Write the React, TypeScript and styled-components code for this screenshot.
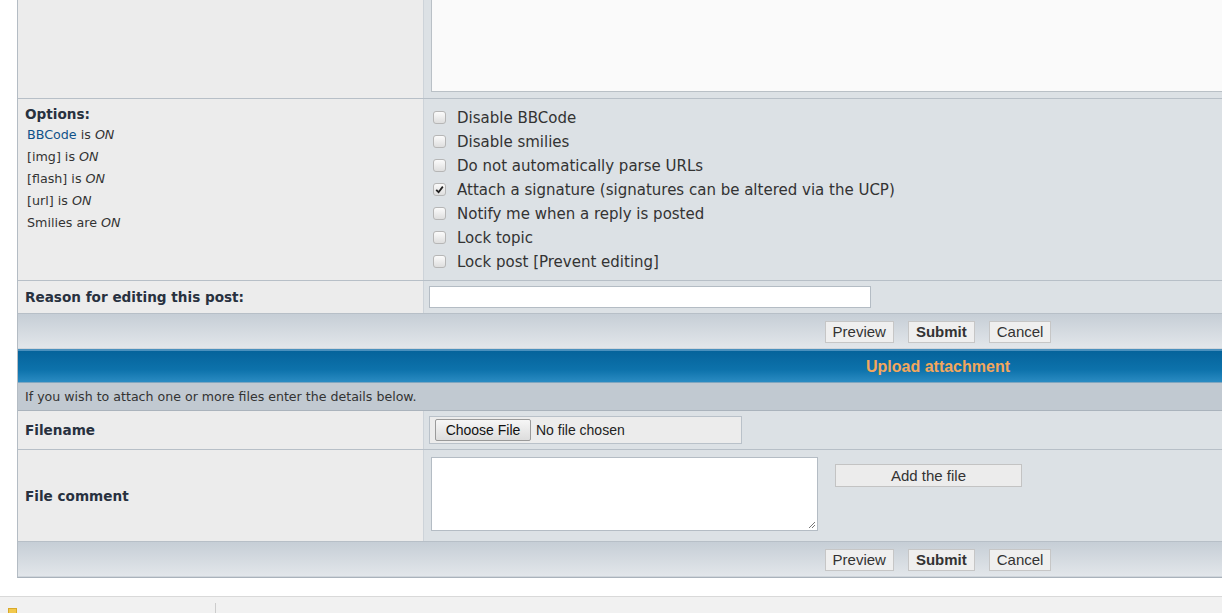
import React from "react";
import styled, { createGlobalStyle } from "styled-components";

const Global = createGlobalStyle`
  html, body { margin: 0; padding: 0; overflow: hidden; background: #ffffff; }
  body { font-family: "DejaVu Sans", Verdana, sans-serif; color: #333333; }
  * { box-sizing: border-box; }
`;

const Page = styled.div`
  width: 1222px;
  height: 613px;
  overflow: hidden;
  display: flex;
  flex-direction: column;
`;

const Panel = styled.div`
  margin-left: 17px;
  width: 1842px;
  border-left: 1px solid #b4bcc4;
  border-right: 1px solid #b4bcc4;
  border-bottom: 1px solid #a9b2bb;
  display: flex;
  flex-direction: column;
`;

const Row = styled.div<{ $h: number }>`
  display: grid;
  grid-template-columns: 406px 1fr;
  height: ${(p) => p.$h}px;
  border-bottom: 1px solid #b7bfc7;
`;

const Label = styled.div<{ $top?: boolean }>`
  background: #ececec;
  border-right: 1px solid #cdd3d9;
  padding: ${(p) => (p.$top ? "7px 7px 0" : "0 7px")};
  display: flex;
  flex-direction: column;
  justify-content: ${(p) => (p.$top ? "flex-start" : "center")};
  font-weight: bold;
  font-size: 13.6px;
  color: #28313f;
`;

const Field = styled.div<{ $pad?: string; $align?: string }>`
  background: #dce1e5;
  padding: ${(p) => p.$pad || "0 0 0 5px"};
  display: flex;
  align-items: ${(p) => p.$align || "center"};
`;

const BigArea = styled.div`
  width: 1420px;
  height: 92px;
  background: #fafafa;
  border: 1px solid #b9c0c6;
  border-top: none;
`;

const SubList = styled.div`
  margin-top: 2px;
  font-weight: normal;
  font-size: 12.7px;
  line-height: 22px;
  color: #333333;
  padding-left: 2px;
`;

const LinkText = styled.span`
  color: #105289;
`;

const OptList = styled.div`
  display: flex;
  flex-direction: column;
  padding-top: 7px;
`;

const OptRow = styled.label`
  display: flex;
  align-items: center;
  height: 24px;
  gap: 11px;
  font-size: 15px;
  color: #333333;
`;

const Box = styled.span`
  width: 13px;
  height: 13px;
  border: 1px solid #b6b6b6;
  border-radius: 3px;
  background: linear-gradient(#fbfbfb, #dedede);
  display: flex;
  align-items: center;
  justify-content: center;
  margin-top: -2px;
  flex-shrink: 0;
`;

const TextInput = styled.div`
  width: 442px;
  height: 22px;
  background: #ffffff;
  border: 1px solid #b4bcc4;
`;

const ButtonBar = styled.div<{ $h: number; $pt: number }>`
  height: ${(p) => p.$h}px;
  padding-top: ${(p) => p.$pt}px;
  background: linear-gradient(#c6ced6, #e2e6ea);
  display: flex;
  justify-content: center;
  gap: 14px;
  border-bottom: 1px solid #cfd5db;
`;

const Btn = styled.button<{ $bold?: boolean }>`
  height: 22px;
  padding: 0 7px;
  background: #efefef;
  border: 1px solid #c6c6c6;
  border-radius: 0;
  font-family: "Liberation Sans", Arial, sans-serif;
  font-size: 15px;
  font-weight: ${(p) => (p.$bold ? "bold" : "normal")};
  color: #333333;
  line-height: 20px;
`;

const Header = styled.div`
  height: 34px;
  border-top: 2px solid #4a90bd;
  background: linear-gradient(#05639b, #0d72ab 60%, #2a8bc2);
  border-bottom: 1px solid #7fa6c0;
  display: flex;
  align-items: center;
  justify-content: center;
  font-family: "Liberation Sans", Arial, sans-serif;
  font-weight: bold;
  font-size: 16px;
  color: #f4a75c;
`;

const Info = styled.div`
  height: 28px;
  background: #c1c9d1;
  border-bottom: 1px solid #aab3bc;
  display: flex;
  align-items: center;
  padding-left: 7px;
  font-size: 12.6px;
  color: #333333;
`;

const FileBox = styled.div`
  width: 313px;
  height: 28px;
  background: #ececec;
  border: 1px solid #b9c1c9;
  display: flex;
  align-items: center;
  padding-left: 5px;
  gap: 5px;
  font-family: "Liberation Sans", Arial, sans-serif;
  font-size: 14px;
  color: #222222;
`;

const FileBtn = styled.span`
  height: 22px;
  width: 96px;
  border: 1px solid #9a9a9a;
  border-radius: 2px;
  background: linear-gradient(#f6f6f6, #dddddd);
  display: flex;
  align-items: center;
  justify-content: center;
  font-size: 14px;
  color: #111111;
`;

const CommentArea = styled.div`
  width: 387px;
  height: 74px;
  background: #ffffff;
  border: 1px solid #b4bcc4;
  position: relative;
`;

const Grip = styled.svg`
  position: absolute;
  right: 1px;
  bottom: 1px;
`;

const AddBtn = styled.button`
  margin-left: 17px;
  margin-top: 7px;
  width: 187px;
  height: 23px;
  background: #ececec;
  border: 1px solid #c3c3c3;
  font-family: "Liberation Sans", Arial, sans-serif;
  font-size: 15px;
  color: #333333;
`;

const Footer = styled.div`
  margin-top: 18px;
  flex: 1;
  background: #f1f1f1;
  border-top: 1px solid #d9d9d9;
  display: grid;
  grid-template-columns: 216px 1fr;
  padding-top: 6px;
`;

const FooterLeft = styled.div`
  border-right: 1px solid #cccccc;
  padding-left: 8px;
  padding-top: 5px;
`;

const Icon = styled.span`
  display: block;
  width: 9px;
  height: 6px;
  background: #f2c94c;
  border: 1px solid #d9a92a;
`;

function Check({ checked }: { checked?: boolean }) {
  return (
    <Box>
      {checked && (
        <svg width="9" height="9" viewBox="0 0 9 9">
          <path d="M1.2 4.8 L3.6 7.2 L7.8 1.6" stroke="#222" strokeWidth="1.8" fill="none" />
        </svg>
      )}
    </Box>
  );
}

const options: [string, boolean][] = [
  ["Disable BBCode", false],
  ["Disable smilies", false],
  ["Do not automatically parse URLs", false],
  ["Attach a signature (signatures can be altered via the UCP)", true],
  ["Notify me when a reply is posted", false],
  ["Lock topic", false],
  ["Lock post [Prevent editing]", false],
];

function Buttons({ h, pt }: { h: number; pt: number }) {
  return (
    <ButtonBar $h={h} $pt={pt}>
      <Btn>Preview</Btn>
      <Btn $bold>Submit</Btn>
      <Btn>Cancel</Btn>
    </ButtonBar>
  );
}

export default function App() {
  return (
    <Page>
      <Global />
      <Panel>
        <Row $h={99}>
          <Label />
          <Field $pad="0 0 0 7px" $align="flex-start">
            <BigArea />
          </Field>
        </Row>
        <Row $h={182}>
          <Label $top>
            <span>Options:</span>
            <SubList>
              <div>
                <LinkText>BBCode</LinkText> is <i>ON</i>
              </div>
              <div>
                [img] is <i>ON</i>
              </div>
              <div>
                [flash] is <i>ON</i>
              </div>
              <div>
                [url] is <i>ON</i>
              </div>
              <div>
                Smilies are <i>ON</i>
              </div>
            </SubList>
          </Label>
          <Field $pad="0 0 0 9px" $align="flex-start">
            <OptList>
              {options.map(([t, c]) => (
                <OptRow key={t}>
                  <Check checked={c} />
                  <span>{t}</span>
                </OptRow>
              ))}
            </OptList>
          </Field>
        </Row>
        <Row $h={33}>
          <Label>Reason for editing this post:</Label>
          <Field>
            <TextInput />
          </Field>
        </Row>
        <Buttons h={35} pt={7} />
        <Header>Upload attachment</Header>
        <Info>If you wish to attach one or more files enter the details below.</Info>
        <Row $h={39}>
          <Label>Filename</Label>
          <Field>
            <FileBox>
              <FileBtn>Choose File</FileBtn>
              <span>No file chosen</span>
            </FileBox>
          </Field>
        </Row>
        <Row $h={92}>
          <Label>File comment</Label>
          <Field $pad="7px 0 0 7px" $align="flex-start">
            <CommentArea>
              <Grip width="9" height="9" viewBox="0 0 9 9">
                <path d="M8 2 L2 8 M8 5 L5 8" stroke="#777" strokeWidth="1" />
              </Grip>
            </CommentArea>
            <AddBtn>Add the file</AddBtn>
          </Field>
        </Row>
        <Buttons h={35} pt={7} />
      </Panel>
      <Footer>
        <FooterLeft>
          <Icon />
        </FooterLeft>
        <div />
      </Footer>
    </Page>
  );
}
